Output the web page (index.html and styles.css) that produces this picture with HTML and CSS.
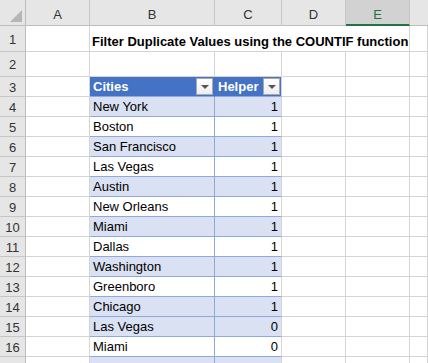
FILE: index.html
```html
<!DOCTYPE html>
<html>
<head>
<meta charset="utf-8">
<link rel="stylesheet" href="styles.css">
</head>
<body>
<div class="sheet">
  <div class="corner"><span class="tri"></span></div>
  <div class="colhead">A</div>
  <div class="colhead">B</div>
  <div class="colhead">C</div>
  <div class="colhead">D</div>
  <div class="colhead sel">E</div>
  <div class="colhead last"></div>

  <div class="rowhead">1</div>
  <div class="cell"></div>
  <div class="cell title">Filter Duplicate Values using the COUNTIF function</div>
  <div class="cell"></div>

  <div class="rowhead">2</div>
  <div class="cell"></div><div class="cell"></div><div class="cell"></div><div class="cell"></div><div class="cell"></div><div class="cell"></div>

  <div class="rowhead">3</div>
  <div class="cell"></div>
  <div class="cell th tb-left">Cities<span class="filter"></span></div>
  <div class="cell th tb-right">Helper<span class="filter"></span></div>
  <div class="cell"></div><div class="cell"></div><div class="cell"></div>

  <div class="rowhead">4</div><div class="cell"></div><div class="cell td band tb-left">New York</div><div class="cell td num band">1</div><div class="cell"></div><div class="cell"></div><div class="cell"></div>
  <div class="rowhead">5</div><div class="cell"></div><div class="cell td tb-left">Boston</div><div class="cell td num">1</div><div class="cell"></div><div class="cell"></div><div class="cell"></div>
  <div class="rowhead">6</div><div class="cell"></div><div class="cell td band tb-left">San Francisco</div><div class="cell td num band">1</div><div class="cell"></div><div class="cell"></div><div class="cell"></div>
  <div class="rowhead">7</div><div class="cell"></div><div class="cell td tb-left">Las Vegas</div><div class="cell td num">1</div><div class="cell"></div><div class="cell"></div><div class="cell"></div>
  <div class="rowhead">8</div><div class="cell"></div><div class="cell td band tb-left">Austin</div><div class="cell td num band">1</div><div class="cell"></div><div class="cell"></div><div class="cell"></div>
  <div class="rowhead">9</div><div class="cell"></div><div class="cell td tb-left">New Orleans</div><div class="cell td num">1</div><div class="cell"></div><div class="cell"></div><div class="cell"></div>
  <div class="rowhead">10</div><div class="cell"></div><div class="cell td band tb-left">Miami</div><div class="cell td num band">1</div><div class="cell"></div><div class="cell"></div><div class="cell"></div>
  <div class="rowhead">11</div><div class="cell"></div><div class="cell td tb-left">Dallas</div><div class="cell td num">1</div><div class="cell"></div><div class="cell"></div><div class="cell"></div>
  <div class="rowhead">12</div><div class="cell"></div><div class="cell td band tb-left">Washington</div><div class="cell td num band">1</div><div class="cell"></div><div class="cell"></div><div class="cell"></div>
  <div class="rowhead">13</div><div class="cell"></div><div class="cell td tb-left">Greenboro</div><div class="cell td num">1</div><div class="cell"></div><div class="cell"></div><div class="cell"></div>
  <div class="rowhead">14</div><div class="cell"></div><div class="cell td band tb-left">Chicago</div><div class="cell td num band">1</div><div class="cell"></div><div class="cell"></div><div class="cell"></div>
  <div class="rowhead">15</div><div class="cell"></div><div class="cell td band tb-left">Las Vegas</div><div class="cell td num band">0</div><div class="cell"></div><div class="cell"></div><div class="cell"></div>
  <div class="rowhead">16</div><div class="cell"></div><div class="cell td tb-left">Miami</div><div class="cell td num">0</div><div class="cell"></div><div class="cell"></div><div class="cell"></div>
  <div class="rowhead last-row"></div><div class="cell"></div><div class="cell td band tb-left"></div><div class="cell td num band"></div><div class="cell"></div><div class="cell"></div><div class="cell"></div>
</div>
</body>
</html>
```
FILE: styles.css
```css
* { box-sizing: border-box; }
html, body {
  margin: 0;
  padding: 0;
  background: #ffffff;
  overflow: hidden;
}
body {
  width: 428px;
  height: 363px;
  font-family: "Liberation Sans", Arial, sans-serif;
  font-size: 13px;
  color: #000;
}
.sheet {
  display: grid;
  grid-template-columns: 26px 64px 125px 67px 64px 64px 1fr;
  grid-template-rows: 26px 26px 25px repeat(15, 20px);
}
.corner {
  background: #e6e6e6;
  border-right: 1px solid #bdbdbd;
  border-bottom: 1px solid #bdbdbd;
  position: relative;
}
.tri {
  position: absolute;
  left: 10px;
  top: 10px;
  width: 0;
  height: 0;
  border-left: 12px solid transparent;
  border-bottom: 12px solid #b6b6b6;
}
.colhead {
  background: #e6e6e6;
  border-right: 1px solid #c6c6c6;
  border-bottom: 1px solid #bdbdbd;
  display: flex;
  align-items: center;
  justify-content: center;
  color: #333;
  font-size: 13px;
  padding-top: 4px;
}
.colhead.sel {
  background: #d2d2d2;
  color: #217346;
  border-bottom: 2px solid #217346;
  padding-top: 5px;
}
.colhead.last { border-right: none; }
.rowhead {
  background: #e6e6e6;
  border-right: 1px solid #bdbdbd;
  border-bottom: 1px solid #c6c6c6;
  display: flex;
  align-items: center;
  justify-content: center;
  color: #333;
  font-size: 13px;
  padding-top: 1px;
}
.cell {
  border-right: 1px solid #d4d4d4;
  border-bottom: 1px solid #d4d4d4;
  line-height: 19px;
  white-space: nowrap;
  padding: 0 3px;
  overflow: hidden;
}
.title {
  grid-column: span 4;
  font-weight: bold;
  display: flex;
  align-items: flex-end;
  line-height: 19px;
  padding-left: 2px;
}
.th {
  background: #4472c4;
  color: #ffffff;
  font-weight: bold;
  position: relative;
  border-bottom-color: #8ea9db;
}
.th.tb-left { border-right-color: #4472c4; }
.th.tb-right { border-right-color: #d4d4d4; }
.filter {
  position: absolute;
  right: 1px;
  top: 1px;
  width: 17px;
  height: 17px;
  background: linear-gradient(#ffffff, #eeeeee);
  border: 1px solid #a9a9a9;
}
.filter::after {
  content: "";
  position: absolute;
  left: 4px;
  top: 6px;
  width: 0;
  height: 0;
  border-left: 4px solid transparent;
  border-right: 4px solid transparent;
  border-top: 4px solid #555;
}
.td { border-bottom-color: #8ea9db; }
.td.tb-left { border-right-color: #8ea9db; }
.band { background: #d9e1f2; }
.num { text-align: right; padding-right: 3px; }
```
